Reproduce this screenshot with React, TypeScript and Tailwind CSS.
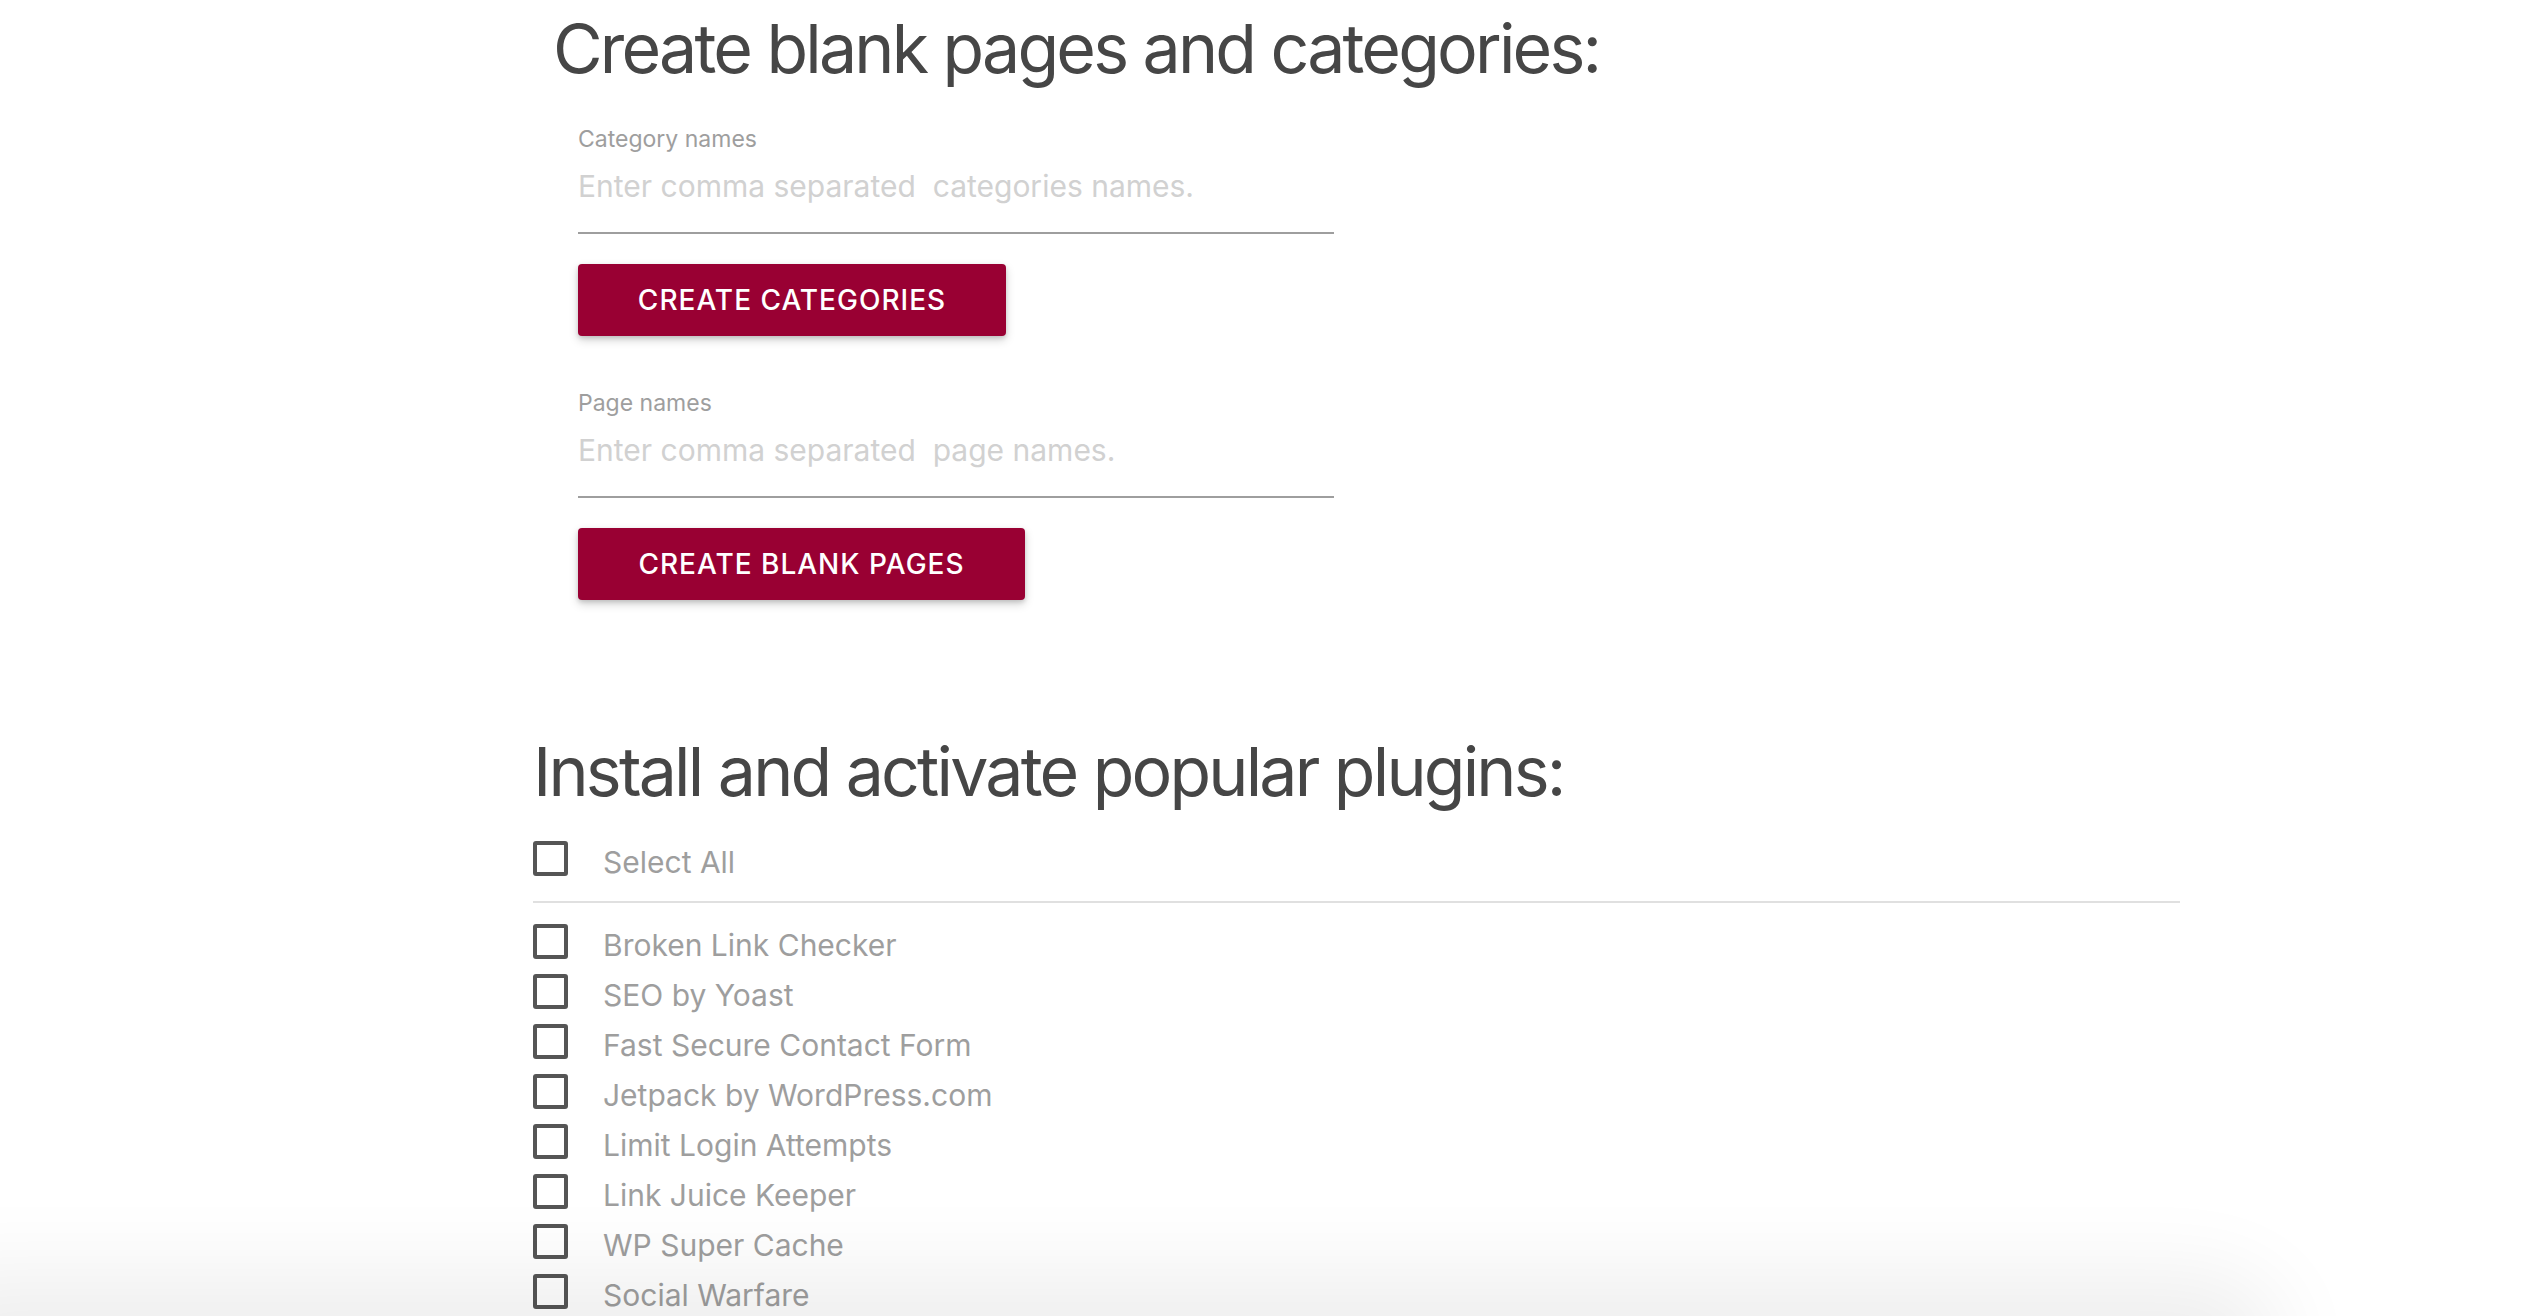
const plugins = [
    "Broken Link Checker",
    "SEO by Yoast",
    "Fast Secure Contact Form",
    "Jetpack by WordPress.com",
    "Limit Login Attempts",
    "Link Juice Keeper",
    "WP Super Cache",
    "Social Warfare",
];

function Checkbox({ label }: { label: string }) {
    return (
        <label className="flex items-start h-[34px] cursor-pointer">
            <span className="block w-[35px] h-[35px] border-[4px] border-[#555] rounded-[3px] shrink-0" />
            <span className="ml-[35px] mt-[6px] text-[30px] leading-none text-[#9e9e9e] whitespace-nowrap">{label}</span>
        </label>
    );
}

function TextField({ label, placeholder }: { label: string; placeholder: string }) {
    return (
        <div className="w-[756px]">
            <label className="block text-[23px] leading-none text-[#9e9e9e]">{label}</label>
            <input
                type="text"
                placeholder={placeholder}
                className="block w-full mt-[17px] h-[66px] pb-[28px] text-[30px] text-[#444] bg-transparent border-b-2 border-[#9e9e9e] outline-none placeholder:text-[#d1d1d1]"
            />
        </div>
    );
}

function Button({ children, width }: { children: string; width: string }) {
    return (
        <button
            className={`${width} h-[72px] mt-[30px] rounded-[4px] bg-[#990033] text-white text-[28px] font-medium tracking-[1px] uppercase shadow-[0_4px_10px_rgba(0,0,0,0.18),0_2px_4px_rgba(0,0,0,0.12)]`}
        >
            {children}
        </button>
    );
}

export default function App() {
    return (
        <div className="relative h-screen overflow-hidden bg-white font-['Inter','Liberation_Sans',sans-serif]">
            <div className="pl-[533px]">
                <div className="pl-[20px] pt-[14px]">
                    <h1 className="text-[68px] leading-none font-normal text-[#464646] tracking-[-2.8px]">
                        Create blank pages and categories:
                    </h1>
                    <div className="pl-[25px] mt-[46px] flex flex-col items-start">
                        <TextField label="Category names" placeholder={"Enter comma separated \u00a0categories names."} />
                        <Button width="w-[428px]">Create Categories</Button>
                        <div className="mt-[56px]">
                            <TextField label="Page names" placeholder={"Enter comma separated \u00a0page names."} />
                        </div>
                        <Button width="w-[447px]">Create Blank Pages</Button>
                    </div>
                </div>

                <div className="w-[1647px] mt-[137px]">
                    <h2 className="text-[68px] leading-none font-normal text-[#464646] tracking-[-2.8px]">
                        Install and activate popular plugins:
                    </h2>
                    <div className="mt-[36px]">
                        <Checkbox label="Select All" />
                    </div>
                    <div className="mt-[26px] h-[2px] bg-[#e0e0e0]" />
                    <div className="mt-[21px] flex flex-col gap-[16px]">
                        {plugins.map((p) => (
                            <Checkbox key={p} label={p} />
                        ))}
                    </div>
                </div>
            </div>

            <div className="absolute left-[-40px] top-[1316px] h-[60px] w-[2280px] rounded-r-[60px] bg-white shadow-[0_0_90px_40px_rgba(0,0,0,0.07)]" />
        </div>
    );
}
